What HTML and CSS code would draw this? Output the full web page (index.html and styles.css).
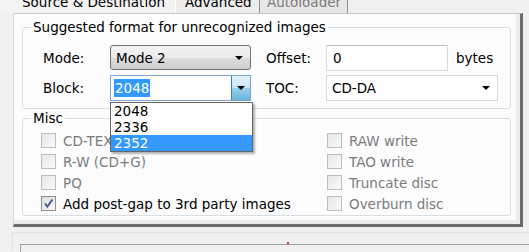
FILE: index.html
```html
<!DOCTYPE html>
<html lang="en">
<head>
  <meta charset="UTF-8">
  <title>Advanced</title>
  <link rel="stylesheet" href="styles.css">
</head>
<body>

<div class="tabs">
  <div class="tab tab-first"><span class="tab-label">Source &amp; Destination</span></div>
  <div class="tab tab-current"><span class="tab-label">Advanced</span></div>
  <div class="tab tab-off"><span class="tab-label">Autoloader</span></div>
</div>

<div class="panel">
  <fieldset class="group group-format">
    <legend>Suggested format for unrecognized images</legend>
    <div class="format-grid">
      <span class="field-label">Mode:</span>
      <div class="combo combo-button"><span class="combo-text">Mode 2</span><span class="arrow"></span></div>
      <span class="field-label field-label-right">Offset:</span>
      <div class="textbox">0</div>
      <span class="unit">bytes</span>

      <span class="field-label">Block:</span>
      <div class="combo combo-edit">
        <span class="combo-text"><span class="selected-text">2048</span></span>
        <span class="drop-btn"><span class="arrow"></span></span>
        <ul class="drop-list">
          <li>2048</li>
          <li>2336</li>
          <li class="hot">2352</li>
        </ul>
      </div>
      <span class="field-label field-label-right">TOC:</span>
      <div class="combo combo-list"><span class="combo-text">CD-DA</span><span class="arrow"></span></div>
    </div>
  </fieldset>

  <fieldset class="group group-misc">
    <legend>Misc</legend>
    <div class="misc-grid">
      <div class="check disabled"><span class="box"></span>CD-TEXT</div>
      <div class="check disabled"><span class="box"></span>RAW write</div>
      <div class="check disabled"><span class="box"></span>R-W (CD+G)</div>
      <div class="check disabled"><span class="box"></span>TAO write</div>
      <div class="check disabled"><span class="box"></span>PQ</div>
      <div class="check disabled"><span class="box"></span>Truncate disc</div>
      <div class="check"><span class="box checked"><svg width="11" height="11" viewBox="0 0 11 11"><path d="M2 5.5 L4.3 8.5 L9.5 1.5" fill="none" stroke="#4a5d8f" stroke-width="2"/></svg></span>Add post-gap to 3rd party images</div>
      <div class="check disabled"><span class="box"></span>Overburn disc</div>
    </div>
  </fieldset>
</div>

<div class="lower">
  <div class="lower-inner"></div>
  <span class="marker"></span>
</div>

</body>
</html>
```

FILE: styles.css
```css
body { margin: 0; width: 529px; height: 252px; overflow: hidden; background: #f0f0f0; font-family: "DejaVu Sans", sans-serif; font-size: 13.5px; color: #000; position: relative; }

/* tab strip, top half cut off */
.tabs { display: flex; height: 13px; overflow: hidden; }
.tab { height: 13px; box-sizing: border-box; overflow: hidden; }
.tab-label { display: block; margin-top: -6px; line-height: 16px; white-space: nowrap; }
.tab-first { width: 176px; padding-left: 22px; background: #f3f3f3; border-right: 1px solid #ffffff; }
.tab-current { width: 84px; padding-left: 9px; background: #ebebeb; border-right: 1px solid #8e8f8f; }
.tab-off { width: 88px; padding-left: 7px; background: #e6e6e6; border-right: 1px solid #8e8f8f; color: #7a7a7a; }

.panel { margin-left: 13px; width: 510px; height: 214px; box-sizing: border-box; background: #fcfcfc; border-top: 1px solid #c9c9c9; border-left: 1px solid #d9d9d9; border-right: 3px solid #6b6b6b; border-bottom: 3px solid #6b6b6b; box-shadow: inset -4px -4px 0 #ececec; padding-top: 5px; }

.group { margin: 0 9px 0 8px; padding: 0 0 0 8px; border: 1px solid #d5dfe5; border-radius: 3px; }
.group legend { padding: 0 2px; line-height: 16px; }
.group-format { height: 90px; box-sizing: border-box; }
.group-misc { margin-top: 1px; height: 106px; box-sizing: border-box; }

.format-grid { display: grid; grid-template-columns: 67px 141px 75px 122px auto; grid-template-rows: 25px 26px; row-gap: 5px; margin: 10px 0 0 12px; align-items: center; }
.field-label-right { padding-left: 15px; }
.unit { padding-left: 8px; }

.combo { position: relative; height: 100%; box-sizing: border-box; display: flex; align-items: center; }
.combo-text { flex: 1; padding-left: 5px; white-space: nowrap; }
.arrow { width: 0; height: 0; border-left: 4px solid transparent; border-right: 4px solid transparent; border-top: 4px solid #000; margin-right: 7px; }

.combo-button { border: 1px solid #707070; border-radius: 3px; background: linear-gradient(#f2f2f2, #ebebeb 50%, #dddddd 51%, #cfcfcf); }
.combo-list { grid-column: 4 / 6; width: 172px; height: 26px; border: 1px solid #d9d9d9; background: #fff; }
.textbox { height: 26px; box-sizing: border-box; border: 1px solid #d9d9d9; border-top-color: #c2c2c2; background: #fff; padding-left: 6px; line-height: 24px; }

.combo-edit { border: 1px solid #7da2ce; background: #fff; width: 141px; }
.combo-edit .combo-text { padding-left: 3px; }
.selected-text { background: #3399ff; color: #fff; padding: 1px 1px; }
.drop-btn { width: 19px; height: 100%; box-sizing: border-box; border-left: 1px solid #3c7fb1; background: linear-gradient(#e5f4fc, #c4e5f6 50%, #98d1ef 51%, #68b3db); display: flex; align-items: center; justify-content: center; }
.drop-btn .arrow { margin-right: 0; }

.drop-list { position: absolute; left: -1px; top: 26px; width: 143px; margin: 0; padding: 0; list-style: none; background: #fff; border: 1px solid #646464; box-sizing: border-box; box-shadow: 2px 2px 2px rgba(0, 0, 0, 0.3); z-index: 2; }
.drop-list li { height: 16px; line-height: 16px; padding-left: 3px; }
.drop-list .hot { background: #3399ff; color: #fff; }

.misc-grid { display: grid; grid-template-columns: 286px auto; grid-auto-rows: 21px; margin: 4px 0 0 10px; }
.check { display: flex; align-items: center; gap: 7px; white-space: nowrap; }
.check.disabled { color: #7b7b7b; }
.box { width: 15px; height: 15px; box-sizing: border-box; border: 1px solid #bcbcbc; background: linear-gradient(135deg, #e6e6e6, #fbfbfb); display: flex; align-items: center; justify-content: center; }
.box.checked { border-color: #8e8f8f; background: linear-gradient(135deg, #dcdcdc, #f8f8f8); }

.lower { margin: 5px 0 0 12px; height: 19px; box-sizing: border-box; border-top: 1px solid #e2e2e2; border-left: 1px solid #e2e2e2; padding: 11px 0 0 7px; }
.lower-inner { height: 7px; border-top: 1px solid #a0a0a0; border-left: 1px solid #a0a0a0; }
.marker { position: absolute; left: 287px; top: 242px; width: 2px; height: 2px; background: #e03030; }
```
